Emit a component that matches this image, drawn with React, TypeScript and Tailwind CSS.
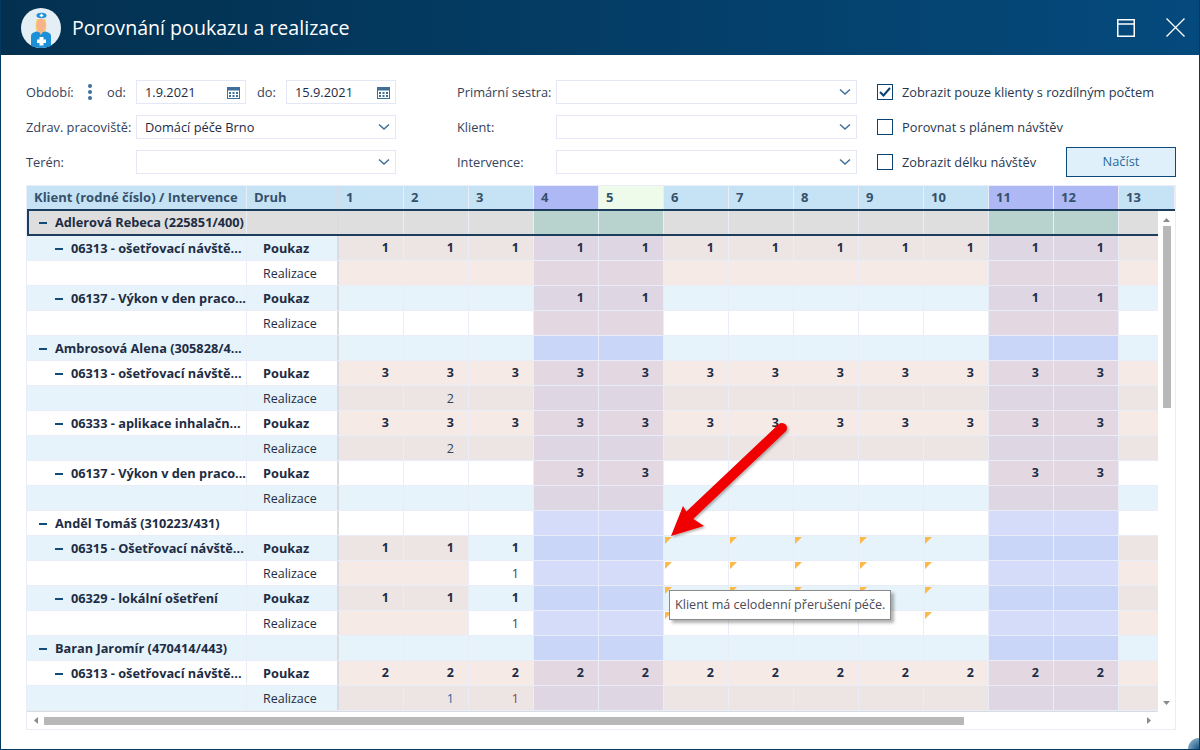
import React from "react";

type Tint = "all" | "weekend" | "partial" | "none";

interface Row {
  label?: string;
  level?: 0 | 1;
  druh?: "Poukaz" | "Realizace";
  tint: Tint;
  values?: Record<number, number>;
  colors?: Record<number, string>;
  markers?: boolean;
  selected?: boolean;
}

const days = [1, 2, 3, 4, 5, 6, 7, 8, 9, 10, 11, 12, 13];
const weekend = [4, 5, 11, 12];

const all = (n: number) =>
  Object.fromEntries(days.slice(0, 12).map((d) => [d, n])) as Record<number, number>;
const weekendOnly = (n: number) =>
  Object.fromEntries(weekend.map((d) => [d, n])) as Record<number, number>;

const rows: Row[] = [
  { label: "Adlerová Rebeca (225851/400)", level: 0, tint: "none", selected: true },
  { label: "06313 - ošetřovací návště...", level: 1, druh: "Poukaz", tint: "all", values: all(1) },
  { druh: "Realizace", tint: "all" },
  { label: "06137 - Výkon v den praco...", level: 1, druh: "Poukaz", tint: "weekend", values: weekendOnly(1) },
  { druh: "Realizace", tint: "weekend" },
  { label: "Ambrosová Alena (305828/4...", level: 0, tint: "none" },
  { label: "06313 - ošetřovací návště...", level: 1, druh: "Poukaz", tint: "all", values: all(3) },
  { druh: "Realizace", tint: "all", values: { 2: 2 } },
  { label: "06333 - aplikace inhalačn...", level: 1, druh: "Poukaz", tint: "all", values: all(3) },
  { druh: "Realizace", tint: "all", values: { 2: 2 } },
  { label: "06137 - Výkon v den praco...", level: 1, druh: "Poukaz", tint: "weekend", values: weekendOnly(3) },
  { druh: "Realizace", tint: "weekend" },
  { label: "Anděl Tomáš (310223/431)", level: 0, tint: "none" },
  { label: "06315 - Ošetřovací návště...", level: 1, druh: "Poukaz", tint: "partial", values: { 1: 1, 2: 1, 3: 1 }, markers: true },
  { druh: "Realizace", tint: "partial", values: { 3: 1 }, markers: true },
  { label: "06329 - lokální ošetření", level: 1, druh: "Poukaz", tint: "partial", values: { 1: 1, 2: 1, 3: 1 }, markers: true },
  { druh: "Realizace", tint: "partial", values: { 3: 1 }, markers: true },
  { label: "Baran Jaromír (470414/443)", level: 0, tint: "none" },
  { label: "06313 - ošetřovací návště...", level: 1, druh: "Poukaz", tint: "all", values: all(2) },
  { druh: "Realizace", tint: "all", values: { 2: 1, 3: 1 }, colors: { 2: "text-[#1c6a9e]", 3: "text-[#9a3b2c]" } },
];

// barva bunky podle radku, dne a typu podbarveni
const cellColor = (row: Row, day: number, striped: boolean) => {
  const isWeekend = weekend.includes(day);
  if (row.selected) return isWeekend ? "bg-[#b8d3cd]" : "bg-[#dedede]";

  let tinted = false;
  if (row.tint === "all") tinted = true;
  if (row.tint === "weekend") tinted = isWeekend;
  if (row.tint === "partial") tinted = day === 1 || day === 2 || day === 13;

  if (isWeekend) {
    if (tinted) return striped ? "bg-[#dfd6e3]" : "bg-[#e3d8e1]";
    return striped ? "bg-[#c9d6f7]" : "bg-[#d5dcf9]";
  }
  if (tinted) return striped ? "bg-[#ede5e3]" : "bg-[#f6eae6]";
  return striped ? "bg-[#e6f3fa]" : "bg-white";
};

const Chevron = () => (
  <svg width="12" height="8" viewBox="0 0 12 8" fill="none" className="shrink-0">
    <path d="M1 1.500 L6 6 L11 1.500" stroke="#3f6f99" strokeWidth="1.500" />
  </svg>
);

const CalendarIcon = () => (
  <svg width="13" height="13" viewBox="0 0 13 13" fill="none" className="shrink-0">
    <rect x="0.500" y="1.500" width="12" height="11" stroke="#3f6f99" fill="#fff" />
    <rect x="0.500" y="1.500" width="12" height="3" fill="#3f6f99" />
    <rect x="2" y="6" width="2" height="2" fill="#3f6f99" />
    <rect x="5.500" y="6" width="2" height="2" fill="#3f6f99" />
    <rect x="9" y="6" width="2" height="2" fill="#3f6f99" />
    <rect x="2" y="9" width="2" height="2" fill="#3f6f99" />
    <rect x="5.500" y="9" width="2" height="2" fill="#3f6f99" />
    <rect x="9" y="9" width="2" height="2" fill="#3f6f99" />
  </svg>
);

const NurseIcon = () => (
  <svg width="40" height="40" viewBox="0 0 40 40" className="shrink-0">
    <circle cx="20" cy="20" r="20" fill="#e4eef5" />
    <path d="M10 38 V28 Q10 25 14 24 L17 23 H23 L26 24 Q30 25 30 28 V38 Q25 40 20 40 Q15 40 10 38 Z" fill="#1d8fd6" />
    <path d="M15 22 Q14 14 16 11 H24 Q26 14 25 22 L23 24 H17 Z" fill="#f6cf6b" />
    <ellipse cx="20" cy="17.500" rx="4.500" ry="7" fill="#f7b48a" />
    <path d="M17.500 23 H22.500 L20 27 Z" fill="#f7b48a" />
    <ellipse cx="20.500" cy="7.500" rx="5" ry="2.800" fill="#1d8fd6" />
    <path d="M19.800 5.700 H21.200 V6.800 H22.300 V8.200 H21.200 V9.300 H19.800 V8.200 H18.700 V6.800 H19.800 Z" fill="#fff" />
    <path d="M18.500 29 H22.500 V31.500 H25 V35 H22.500 V37.500 H18.500 V35 H16 V31.500 H18.500 Z" fill="#fff" />
  </svg>
);

const Field = ({ value, icon, className }: { value?: string; icon: React.ReactNode; className: string }) => (
  <div className={`flex h-6 items-center justify-between border border-[#e4e8f6] bg-white pl-2 pr-[5px] text-[#1d2c44] ${className}`}>
    <span className="pt-px">{value}</span>
    {icon}
  </div>
);

const Check = ({ label, checked }: { label: string; checked?: boolean }) => (
  <div className="flex h-6 items-center gap-[9px]">
    <div className="flex size-4 items-center justify-center border border-[#0b426f] bg-white">
      {checked && (
        <svg width="12" height="10" viewBox="0 0 12 10" fill="none">
          <path d="M1 5 L4.500 8.500 L11 1" stroke="#0b426f" strokeWidth="2" />
        </svg>
      )}
    </div>
    <span className="pt-px text-[#26374f]">{label}</span>
  </div>
);

const Triangle = ({ dir }: { dir: "up" | "down" | "left" | "right" }) => {
  const d = {
    up: "M0 5 L3.500 1 L7 5 Z",
    down: "M0 1 L7 1 L3.500 5 Z",
    left: "M5 0 L5 7 L1 3.500 Z",
    right: "M1 0 L1 7 L5 3.500 Z",
  }[dir];
  return (
    <svg width={dir === "up" || dir === "down" ? 7 : 6} height={dir === "up" || dir === "down" ? 6 : 7} className="shrink-0">
      <path d={d} fill="#8a8a8a" />
    </svg>
  );
};

const DataRow = ({ row, index }: { row: Row; index: number }) => {
  const striped = index % 2 === 1;
  const first = row.selected
    ? "bg-[#dedede] border-l-2 border-l-[#1d3d5c]"
    : striped
      ? "bg-[#e6f3fa]"
      : "bg-white";

  return (
    <div className={`flex h-[25px] shrink-0 ${row.selected ? "border-b-2 border-b-[#1d3d5c]" : "border-b border-b-[#e9edf7]"}`}>
      <div className={`flex w-[220px] shrink-0 items-center border-r border-r-[#e9edf7] pt-px text-[12.75px] font-bold text-[#1d2c44] ${first} ${row.level === 1 ? "pl-7" : row.selected ? "pl-[10px]" : "pl-3"}`}>
        {row.label && (
          <>
            <span className="mr-2 h-[2px] w-2 shrink-0 bg-[#0f4c7c]" />
            <span className="whitespace-nowrap">{row.label}</span>
          </>
        )}
      </div>
      <div className={`flex w-[92px] shrink-0 items-center border-r-2 border-r-[#d8dbe0] pl-[16px] text-[#1d2c44] ${row.selected ? "bg-[#dedede]" : striped ? "bg-[#e6f3fa]" : "bg-white"} ${row.druh === "Poukaz" ? "pt-px text-[12.75px] font-bold" : "pt-[2px]"}`}>
        {row.druh}
      </div>
      {days.map((day) => {
        const value = row.values?.[day];
        const showMarker = row.markers && day >= 6 && day <= 10;
        return (
          <div
            key={day}
            className={`relative flex w-[65px] shrink-0 items-center justify-end border-r border-r-[#e9edf7] pr-[14px] ${cellColor(row, day, striped)} ${row.druh === "Poukaz" ? "pt-px font-bold text-[#1d2c44]" : `pt-[2px] ${row.colors?.[day] ?? "text-[#33425a]"}`}`}
          >
            {showMarker && (
              <span className="absolute left-px top-px size-0 border-r-[7px] border-t-[7px] border-r-transparent border-t-[#fdb84a]" />
            )}
            {value}
          </div>
        );
      })}
    </div>
  );
};

const App = () => {
  return (
    <div className="relative flex h-[750px] w-[1200px] flex-col overflow-hidden border-b border-l border-r border-[#043a5f] bg-white text-[12.5px] [font-family:'Open_Sans',sans-serif]">
      {/* hlavicka okna */}
      <div className="flex h-[55px] shrink-0 items-center bg-gradient-to-r from-[#03304f] to-[#054a7d] pl-[20px] pr-[14px]">
        <NurseIcon />
        <h1 className="ml-[11px] text-[19.6px] text-white">Porovnání poukazu a realizace</h1>
        <div className="ml-auto flex items-center gap-[31px]">
          <svg width="18" height="18" viewBox="0 0 18 18" fill="none">
            <rect x="0.750" y="0.750" width="16.500" height="16.500" stroke="#fff" strokeWidth="1.500" />
            <path d="M0 5 H18" stroke="#fff" strokeWidth="1.500" />
          </svg>
          <svg width="19" height="19" viewBox="0 0 19 19" fill="none">
            <path d="M0.500 0.500 L18.500 18.500 M18.500 0.500 L0.500 18.500" stroke="#fff" strokeWidth="1.300" />
          </svg>
        </div>
      </div>

      {/* filtry */}
      <div className="flex pl-[25px] pt-[25px] text-[12.8px]">
        <div className="flex w-[370px] shrink-0 flex-col gap-[11px] text-[#33425a]">
          <div className="flex h-6 items-center">
            <span className="w-[54px] whitespace-nowrap pt-px">Období:</span>
            <span className="flex w-[20px] flex-col items-center gap-[2px]">
              <span className="size-[4px] rounded-full bg-[#3f6f99]" />
              <span className="size-[4px] rounded-full bg-[#3f6f99]" />
              <span className="size-[4px] rounded-full bg-[#3f6f99]" />
            </span>
            <span className="ml-[7px] w-[29px] pt-px">od:</span>
            <Field value="1.9.2021" icon={<CalendarIcon />} className="w-[110px]" />
            <span className="w-[40px] pl-[11px] pt-px">do:</span>
            <Field value="15.9.2021" icon={<CalendarIcon />} className="w-[110px]" />
          </div>
          <div className="flex h-6 items-center">
            <span className="w-[110px] whitespace-nowrap pt-px">Zdrav. pracoviště:</span>
            <Field value="Domácí péče Brno" icon={<Chevron />} className="w-[260px]" />
          </div>
          <div className="flex h-6 items-center">
            <span className="w-[110px] pt-px">Terén:</span>
            <Field icon={<Chevron />} className="w-[260px]" />
          </div>
        </div>

        <div className="ml-[61px] flex w-[400px] shrink-0 flex-col gap-[11px] text-[#33425a]">
          {["Primární sestra:", "Klient:", "Intervence:"].map((label) => (
            <div key={label} className="flex h-6 items-center">
              <span className="w-[99px] whitespace-nowrap pt-px">{label}</span>
              <Field icon={<Chevron />} className="w-[301px]" />
            </div>
          ))}
        </div>

        <div className="ml-[20px] flex w-[299px] shrink-0 flex-col gap-[11px]">
          <Check label="Zobrazit pouze klienty s rozdílným počtem" checked />
          <Check label="Porovnat s plánem návštěv" />
          <div className="flex h-6 items-center justify-between">
            <Check label="Zobrazit délku návštěv" />
            <button className="h-[30px] w-[110px] border border-[#0b4a7c] bg-[#dff0fa] text-[#2c6a96]">Načíst</button>
          </div>
        </div>
      </div>

      {/* tabulka */}
      <div className="ml-[25px] mt-[11px] flex h-[545px] w-[1150px] flex-col border border-[#e9edf7]">
        <div className="flex h-[25px] shrink-0 border-b-2 border-b-[#1d3d5c] text-[13px] font-bold text-[#35506b]">
          <div className="flex w-[220px] shrink-0 items-center whitespace-nowrap border-r border-r-[#e9edf7] bg-[#c5e3f5] pl-[7px] pt-px">Klient (rodné číslo) / Intervence</div>
          <div className="flex w-[92px] shrink-0 items-center border-r-2 border-r-[#d8dbe0] bg-[#c5e3f5] pl-[7px] pt-px">Druh</div>
          {days.map((day) => (
            <div
              key={day}
              className={`flex items-center border-r border-r-[#e9edf7] pl-[7px] pt-px ${day === 13 ? "min-w-0 flex-1" : "w-[65px] shrink-0"} ${day === 5 ? "bg-[#eefaea]" : weekend.includes(day) ? "bg-[#adb8f5]" : "bg-[#c5e3f5]"}`}
            >
              {day}
            </div>
          ))}
        </div>

        <div className="flex min-h-0 flex-1">
          <div className="flex h-[501px] w-[1131px] shrink-0 flex-col overflow-hidden border-b border-b-[#d8dbe0]">
            {rows.map((row, index) => (
              <DataRow key={index} row={row} index={index} />
            ))}
          </div>
          <div className="flex flex-1 flex-col items-center pt-[6px]">
            <Triangle dir="up" />
            <div className="mt-[3px] h-[182px] w-2 bg-[#b8b8b8]" />
            <div className="mt-auto pb-[6px]">
              <Triangle dir="down" />
            </div>
          </div>
        </div>

        <div className="flex h-[17px] shrink-0 items-center pl-[6px]">
          <Triangle dir="left" />
          <div className="ml-[5px] h-2 w-[920px] bg-[#b8b8b8]" />
          <div className="ml-[182px]">
            <Triangle dir="right" />
          </div>
        </div>
      </div>

      {/* sipka a tooltip nad tabulkou */}
      <svg width="140" height="135" viewBox="0 0 140 135" className="absolute left-[659px] top-[415px]" fill="none">
        <defs>
          <filter id="arrowShadow" x="-10%" y="-10%" width="120%" height="120%">
            <feDropShadow dx="1.500" dy="1.500" stdDeviation="1.200" floodColor="#000" floodOpacity="0.3" />
          </filter>
        </defs>
        <g filter="url(#arrowShadow)">
          <path d="M122 13 L29 101" stroke="#f00000" strokeWidth="10" strokeLinecap="round" />
          <path d="M11 121 L23 91 L29 101 L44 111 Z" fill="#f00000" />
        </g>
      </svg>
      <div className="absolute left-[668px] top-[590px] flex h-[30px] items-center whitespace-nowrap border border-[#8a8a8a] bg-white px-[5px] text-[12.6px] text-[#4a4a55] shadow-[3px_3px_3px_rgba(0,0,0,0.3)]">
        Klient má celodenní přerušení péče.
      </div>

      {/* roh okna */}
      <div className="absolute bottom-0 right-0 size-[11px] rounded-tl-full bg-[radial-gradient(circle_at_100%_100%,#14527f,#a9c7dd)]" />
    </div>
  );
};

export default App;
